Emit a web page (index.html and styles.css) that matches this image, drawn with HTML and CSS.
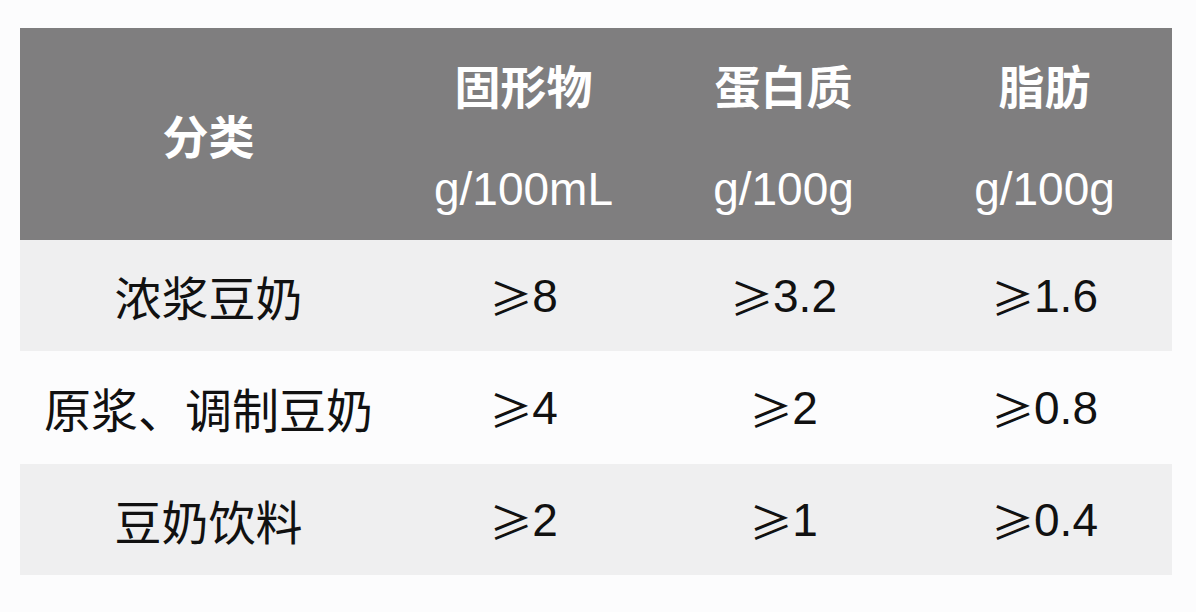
FILE: index.html
```html
<!DOCTYPE html>
<html lang="zh-CN">
<head>
<meta charset="utf-8">
<link rel="stylesheet" href="styles.css">
</head>
<body>
<div class="table">
  <div class="cell head cat">分类</div>
  <div class="cell head"><span class="h1">固形物</span><span class="h2">g/100mL</span></div>
  <div class="cell head"><span class="h1">蛋白质</span><span class="h2">g/100g</span></div>
  <div class="cell head"><span class="h1">脂肪</span><span class="h2">g/100g</span></div>

  <div class="cell shade r1 name">浓浆豆奶</div>
  <div class="cell shade r1"><span class="ge">≥</span>8</div>
  <div class="cell shade r1"><span class="ge">≥</span>3.2</div>
  <div class="cell shade r1"><span class="ge">≥</span>1.6</div>

  <div class="cell r2 name">原浆、调制豆奶</div>
  <div class="cell r2"><span class="ge">≥</span>4</div>
  <div class="cell r2"><span class="ge">≥</span>2</div>
  <div class="cell r2"><span class="ge">≥</span>0.8</div>

  <div class="cell shade r3 name">豆奶饮料</div>
  <div class="cell shade r3"><span class="ge">≥</span>2</div>
  <div class="cell shade r3"><span class="ge">≥</span>1</div>
  <div class="cell shade r3"><span class="ge">≥</span>0.4</div>
</div>
</body>
</html>
```
FILE: styles.css
```css
html, body {
  margin: 0;
  padding: 0;
  background: #fcfcfd;
}
body {
  width: 1196px;
  height: 612px;
  overflow: hidden;
  font-family: "Liberation Sans", "Noto Sans CJK SC", sans-serif;
}
.table {
  margin: 28px 0 0 20px;
  width: 1152px;
  display: grid;
  grid-template-columns: 377px 253px 267px 255px;
  grid-template-rows: 212px 111px 113px 111px;
}
.cell {
  display: flex;
  align-items: center;
  justify-content: center;
  font-size: 46px;
  color: #111;
  white-space: nowrap;
}
.name {
  font-family: "Noto Sans CJK SC", sans-serif;
  font-size: 47px;
}
.head {
  background: #7f7e7f;
  color: #fff;
  flex-direction: column;
}
.cat {
  font-family: "Noto Sans CJK SC", sans-serif;
  font-weight: 700;
  font-size: 46px;
}
.h1 {
  font-family: "Noto Sans CJK SC", sans-serif;
  font-weight: 700;
  font-size: 46px;
  line-height: 105px;
  margin-top: 6px;
}
.h2 {
  line-height: 105px;
}
.shade {
  background: #efeff0;
}
.ge {
  font-family: "Noto Sans CJK SC", sans-serif;
  font-size: 43px;
}
```
